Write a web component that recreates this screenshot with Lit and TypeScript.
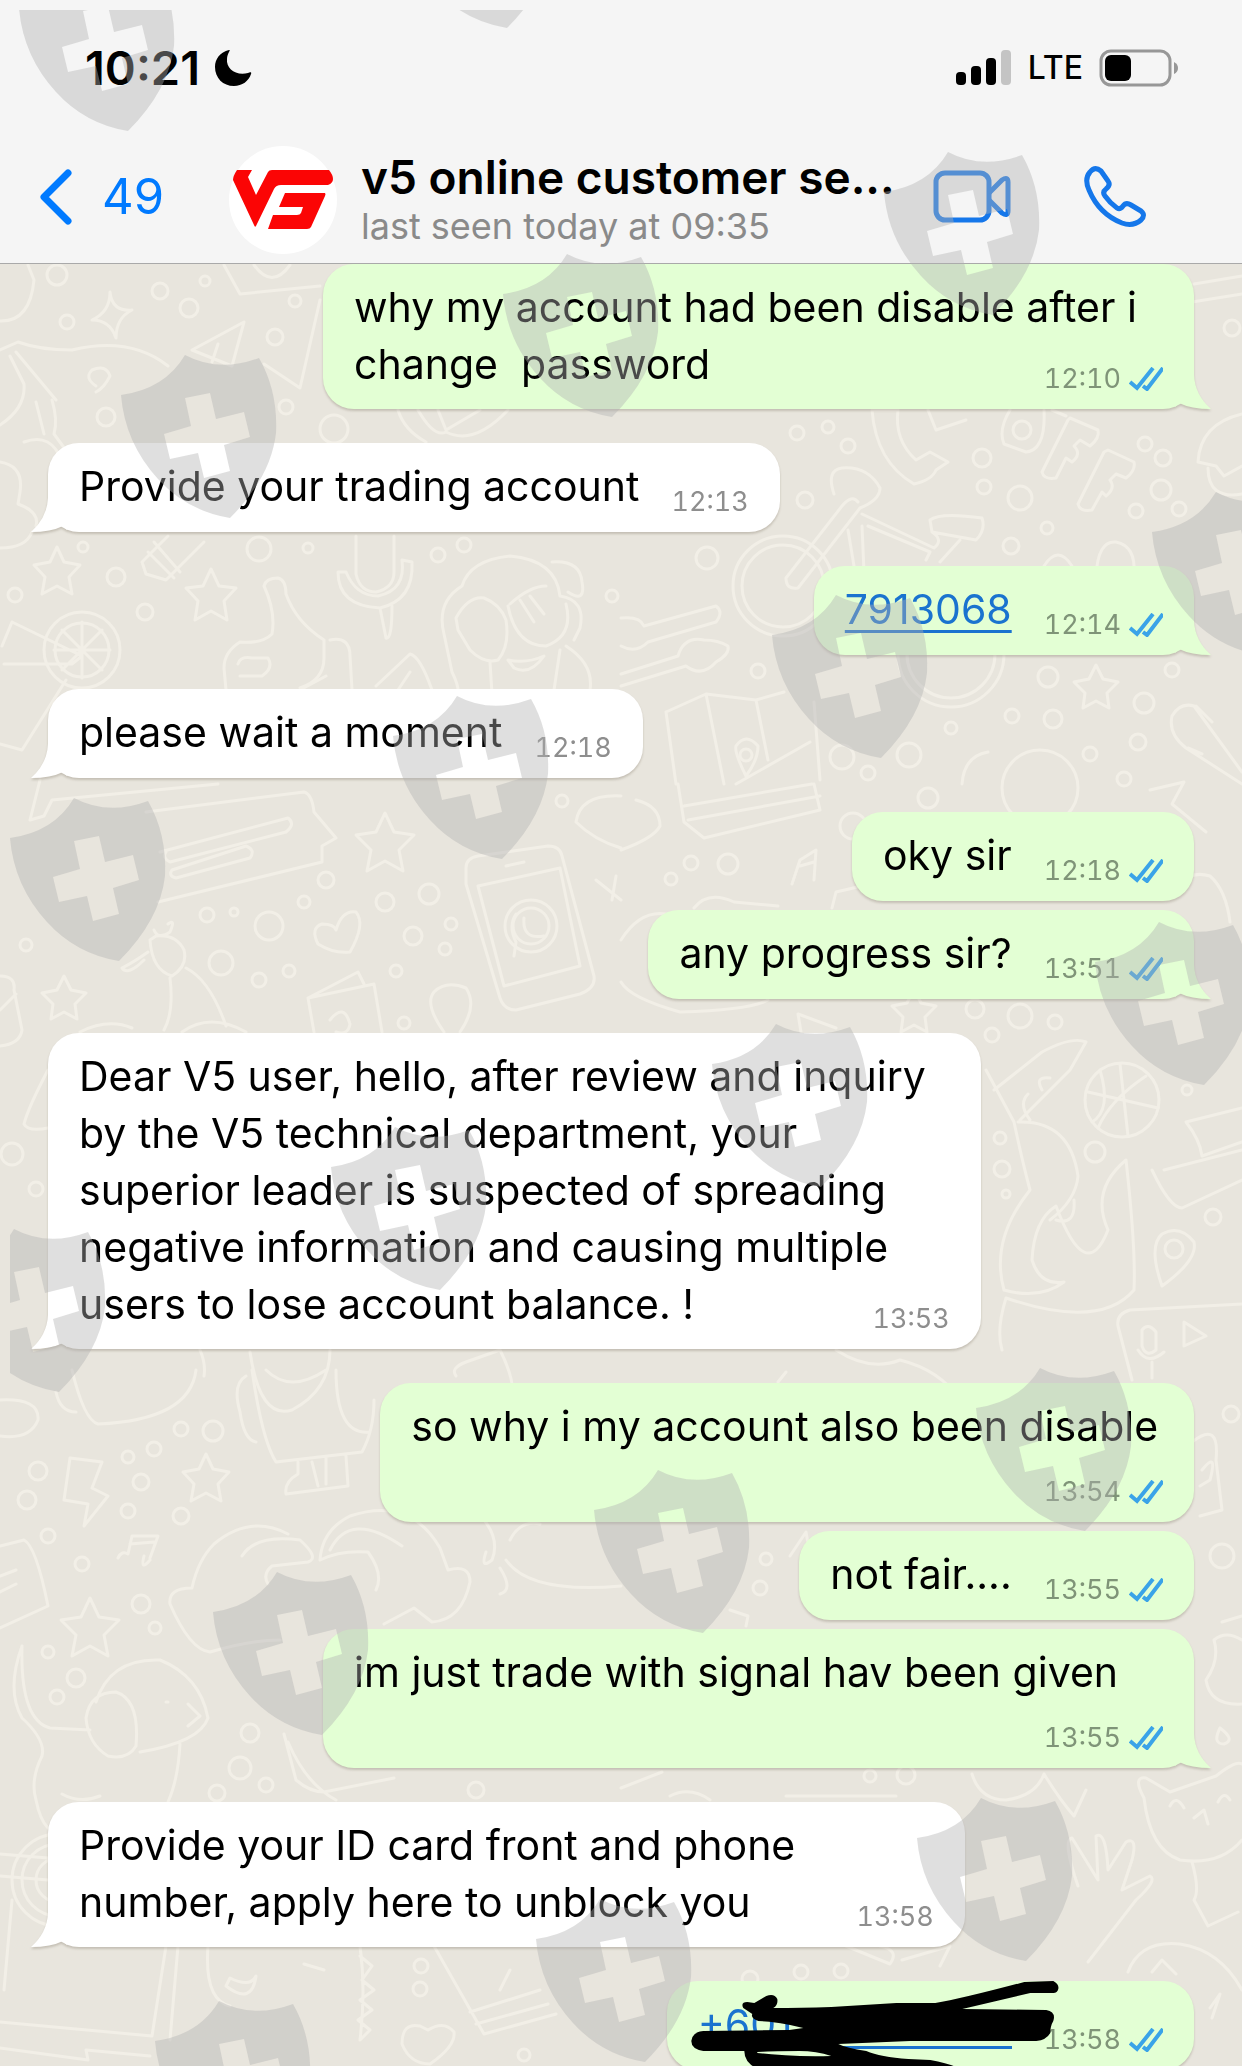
import { LitElement, html, svg, css, nothing } from "lit";
import { customElement, property } from "lit/decorators.js";
import { classMap } from "lit/directives/class-map.js";
import { styleMap } from "lit/directives/style-map.js";

interface Message {
  text: string;
  time: string;
  out?: boolean;
  link?: boolean;
  tail?: boolean;
  /** Share of the row, in percent, taken by a message that wraps. */
  share?: number;
  scribble?: boolean;
}

const MESSAGES: Message[] = [
  { text: "why my account had been disable after i\nchange  password", time: "12:10", out: true, tail: true, share: 76 },
  { text: "Provide your trading account", time: "12:13", tail: true },
  { text: "7913068", time: "12:14", out: true, tail: true, link: true },
  { text: "please wait a moment", time: "12:18", tail: true },
  { text: "oky sir", time: "12:18", out: true },
  { text: "any progress sir?", time: "13:51", out: true, tail: true },
  {
    text: "Dear V5 user, hello, after review and inquiry\nby the V5 technical department, your\nsuperior leader is suspected of spreading\nnegative information and causing multiple\nusers to lose account balance. !",
    time: "13:53", tail: true, share: 81.4,
  },
  { text: "so why i my account also been disable", time: "13:54", out: true, share: 71 },
  { text: "not fair....", time: "13:55", out: true },
  { text: "im just trade with signal hav been given", time: "13:55", out: true, tail: true, share: 76 },
  { text: "Provide your ID card front and phone\nnumber, apply here to unblock you", time: "13:58", tail: true, share: 80 },
  { text: "+601", time: "13:58", out: true, link: true, scribble: true },
];

/** Left edge and peak of every shield in the overlay. */
const SHIELDS: [number, number][] = [
  [19, -32], [398, -135], [884, 152], [503, 254], [121, 355], [1152, 492],
  [772, 595], [393, 696], [10, 798], [1095, 922], [712, 1024], [331, 1127],
  [-50, 1229], [976, 1368], [594, 1470], [213, 1572], [917, 1798],
  [536, 1899], [155, 2001],
];

const SHIELD_PATH =
  "M64 0Q98 18 138 3Q157 36 155 78Q150 122 109 163Q66 156 37 124Q4 88 0 40Q44 34 64 0Z" +
  "M64 43L70 71L43 79L49 104L77 98L83 123L109 116L103 90L129 82L123 57L95 64L89 38Z";

/** Outline of the pen strokes drawn over the phone number. */
const SCRIBBLE_PATH =
  "M743 2008Q740 2002 747 2002L754 2003L766 1996Q774 1993 777 1999Q778 2005 773 2008Q800 2008 831 2007L896 2003L935 2003" +
  "Q960 1999 1024 1982L1053 1981Q1059 1984 1058 1989Q1057 1993 1053 1993H1030L962 2009L1046 2010Q1056 2012 1053 2021" +
  "Q1050 2026 1050 2033Q1046 2040 1036 2041L910 2041L838 2044Q846 2048 866 2051Q880 2057 908 2059L930 2060Q946 2063 956 2067" +
  "L956 2072H766Q744 2066 744 2051H703Q691 2049 691 2041Q692 2032 703 2031L789 2030L803 2028Q780 2022 758 2021Q750 2018 752 2014Z" +
  "M757 2053Q790 2057 831 2056Q816 2051 799 2051Q776 2051 757 2052Z";

/** Small rings of the wallpaper: centre x, centre y, radius. */
const RINGS: [number, number, number][] = [
  [57, 275, 10], [205, 281, 5], [160, 291, 8], [189, 308, 9], [295, 301, 6], [67, 322, 7], [275, 337, 8],
  [106, 417, 9], [286, 407, 7], [334, 429, 14], [259, 549, 12], [308, 548, 5], [83, 547, 5], [116, 577, 9],
  [15, 595, 7], [438, 555, 7], [464, 545, 7], [145, 612, 8], [612, 596, 6], [797, 433, 7], [828, 427, 6],
  [848, 446, 7], [982, 458, 9], [984, 487, 7], [1020, 498, 12], [805, 500, 8], [1145, 444, 7], [1163, 458, 8],
  [1161, 490, 10], [1136, 511, 7], [1179, 509, 7], [1047, 528, 6], [1011, 546, 8], [707, 558, 11],
  [758, 671, 7], [1048, 677, 10], [1172, 670, 7], [1144, 703, 10], [1012, 716, 7], [1053, 719, 9],
  [951, 728, 6], [1138, 742, 8], [1090, 754, 7], [909, 755, 12], [842, 757, 12], [868, 773, 7], [1124, 779, 7],
  [1232, 328, 8], [326, 880, 8], [304, 902, 6], [385, 902, 9], [429, 894, 10], [207, 915, 7], [234, 912, 4],
  [269, 926, 14], [413, 936, 9], [451, 924, 6], [445, 949, 6], [26, 945, 6], [221, 963, 12], [259, 980, 7],
  [289, 971, 6], [396, 971, 6], [404, 1023, 6], [562, 801, 6], [12, 1154, 11], [36, 1189, 7], [928, 798, 10],
  [691, 863, 7], [728, 864, 10], [671, 879, 6], [853, 826, 13], [975, 1009, 9], [1020, 1016, 12],
  [1055, 1022, 7], [992, 1035, 7], [1187, 1090, 5], [1095, 1152, 10], [1000, 1138, 6], [1002, 1169, 8],
  [1213, 1217, 8], [1006, 1194, 4], [181, 1429, 7], [213, 1431, 10], [154, 1449, 7], [128, 1457, 6],
  [38, 1471, 9], [141, 1482, 8], [27, 1500, 9], [128, 1511, 7], [181, 1516, 8], [48, 1536, 7], [82, 1564, 7],
  [141, 1604, 9], [155, 1628, 6], [48, 1652, 6], [76, 1678, 9], [57, 1697, 7], [250, 1733, 9], [240, 1768, 11],
  [217, 1793, 8], [266, 1785, 7], [476, 1790, 8], [421, 1966, 7], [420, 1989, 7], [524, 2055, 6],
  [766, 1559, 6], [760, 1588, 7], [1231, 1414, 8], [1222, 1556, 12], [870, 1776, 6], [906, 1775, 9],
  [801, 1972, 7], [841, 1971, 7], [750, 1979, 8],
  // wheels, slices, balls and the badge on the tablet
  [783, 586, 50], [783, 586, 41], [951, 654, 53], [951, 654, 44], [82, 650, 38], [82, 650, 27],
  [1122, 1100, 37], [531, 926, 26], [531, 926, 18], [58, 1880, 46], [58, 1880, 36], [58, 1880, 22],
  [1174, 1249, 9], [746, 755, 6], [1022, 430, 9], [1040, 788, 38], [160, 724, 15],
];

/** Five-pointed stars: centre x, centre y, outer radius. */
const STARS: [number, number, number][] = [
  [57, 573, 26], [211, 597, 28], [1096, 689, 24], [385, 845, 32], [64, 1000, 24],
  [914, 1013, 24], [206, 1480, 26], [90, 1630, 32],
];

/** Open outlines of the wallpaper. */
const OUTLINES = [
  // four-point sparkle, sails, camera
  "M110 292Q112 312 132 310Q116 318 116 338Q110 320 92 320Q110 312 110 292Z",
  "M244 322L192 350L232 366ZM218 344L212 362M264 364L300 388L320 300",
  "M224 265L240 294L320 286M254 265Q272 290 290 265",
  "M0 321Q30 322 34 280L28 265M0 350L18 342Q40 350 72 350Q130 336 168 366M16 352L56 400M0 425Q26 408 24 384L10 356",
  "M96 386Q84 378 92 370Q106 364 110 376Q104 388 96 392M52 400Q58 420 54 434L76 464M36 402L44 434M24 442Q52 432 62 462",
  "M0 462Q24 466 20 492L18 504Q40 512 36 526M0 548Q26 548 32 532",
  // cup and bottle
  "M168 536L142 562L146 574L166 580L204 542M154 542L180 572M148 552L174 578",
  // thumb up
  "M264 586Q266 578 278 578Q286 580 286 594Q296 622 324 640V658Q324 680 300 688M264 586Q276 612 272 634Q262 644 240 642Q224 652 224 668L226 690M238 664Q240 656 252 658H268Q274 668 262 676H240M330 640Q350 636 350 656L352 690",
  // microphone
  "M356 536V574Q360 592 376 592Q394 588 394 572V536M338 572Q338 606 380 608Q414 600 412 562L402 560Q406 590 378 596Q356 596 346 572ZM380 608L386 638Q392 640 392 606",
  // covered face
  "M462 586Q470 560 510 556Q556 560 560 596Q586 600 580 628L574 640M462 586Q436 602 444 634L452 672Q462 692 456 700M456 618Q468 596 484 598Q500 604 506 620Q510 646 498 660Q484 664 470 650L458 630ZM510 604Q530 586 546 586M520 600L534 622M530 596L544 614M508 606Q516 646 546 646Q574 636 566 604M508 660Q526 664 544 656Q530 676 514 668ZM566 646Q594 664 590 690M490 662L492 694M560 650L554 690",
  "M552 562Q580 560 582 582Q586 604 568 592M376 686L410 654Q420 656 432 690M398 690L410 672M300 690L326 676",
  // cheese
  "M2 646L12 622L82 656L72 664L4 664M66 680L22 750L0 744M82 622V678M54 650H110M62 630L102 670M102 630L62 670",
  // drawings to the right of the first messages
  "M398 410Q404 430 426 442M418 410Q434 438 446 432Q474 446 508 410M438 410L446 430L480 410",
  "M872 410Q876 462 914 484Q932 480 936 470L948 462L930 452L916 460Q894 440 898 410ZM928 410L936 430L966 420",
  "M1010 410Q998 430 1004 444L1026 452Q1046 450 1044 410M1052 410L1066 416",
  "M1070 418L1098 430Q1100 438 1090 446L1080 440L1074 446Q1082 454 1072 462L1066 458L1056 478Q1044 480 1042 472L1068 420Z",
  "M1108 450L1134 462Q1136 470 1126 478L1116 474L1110 480Q1116 488 1106 496L1102 492L1092 510Q1080 512 1078 504L1104 452Z",
  "M1198 462Q1200 424 1242 414M1198 462L1216 466L1224 476L1242 466M1208 468Q1208 500 1242 494M1194 284L1242 276M1192 302L1242 294",
  // bicycle
  "M834 494Q826 470 842 468Q868 466 880 488Q880 500 860 508L798 588Q786 590 786 578L842 506Q852 494 858 502M862 514L934 548Q944 540 932 532L930 520Q940 512 982 518Q986 530 976 540L932 532M868 526L930 552M848 530L856 578M862 526L864 572M930 552L926 560M940 562L960 540",
  "M1044 566Q1058 544 1072 566M1096 576Q1098 540 1116 542Q1136 546 1134 574",
  // brush tools at the edge
  "M621 618Q640 616 644 626L716 606Q724 612 716 622L648 642Q636 654 621 646M621 674L678 656Q684 636 704 640Q718 640 728 646Q730 654 716 662Q702 678 686 666L621 686",
  // map
  "M666 712L706 694L756 700L784 692M666 712L676 784M706 694L724 784M756 700L768 760M814 702L820 780M736 784L810 742M746 776Q734 752 736 746Q746 732 758 746Q758 760 746 776Z",
  // dumbbell and gear
  "M1172 716Q1180 702 1194 706L1242 772M1172 716Q1168 734 1186 748L1242 784M1196 706L1212 722M1188 748L1202 754M962 784Q964 756 988 752",
  "M678 784L684 822L704 838L820 810L814 784M684 806L812 784M688 820L820 796",
  "M1150 790L1184 782L1172 804L1206 832",
  // speech bubble with lines
  "M40 780L30 820L44 816L52 800L218 784M146 812L304 792Q312 794 314 812L336 838L322 846L322 862L158 902M160 852L288 818Q296 824 286 832L170 862Q162 858 166 852M172 870L246 846Q256 850 250 858L176 878Q168 876 172 870",
  // tablet
  "M466 868Q466 858 478 856L548 846Q560 846 562 856L594 976Q596 988 580 994L516 1010Q504 1010 500 998L466 884ZM478 886L560 868L580 966L504 986ZM506 866L524 862M514 956L516 942Q508 926 516 914M524 918Q522 940 544 936",
  // heart, tag, balloons
  "M318 944Q310 928 322 924Q334 924 336 930Q342 910 356 912Q366 924 350 952Q334 954 318 944Z",
  "M308 998L358 972L364 984M308 998L314 1032M308 998L374 984L382 1032M330 1020Q344 1002 350 1024Q348 1036 336 1032",
  "M444 1032Q424 1004 434 992Q446 980 466 988Q478 1006 460 1032M621 848Q594 840 576 822Q580 794 621 796M636 800Q660 806 660 826Q654 838 621 850M596 880L621 900M616 876L612 900",
  "M168 924Q176 918 170 932Q158 940 154 930M150 940Q152 970 172 976Q188 966 184 950Q176 934 156 936ZM148 952Q134 962 122 968Q128 976 144 960M170 978Q174 1012 164 1030M186 968Q210 980 226 1026M80 1032Q108 1018 132 1028M182 1032Q210 1012 246 1032",
  "M0 976Q16 976 14 990L22 1030Q20 1044 0 1046M0 1010L16 994M48 1070Q28 1108 24 1124Q28 1132 48 1128",
  // note
  "M792 884L800 860L816 850L814 880M800 866L814 862",
  // plane and cat silhouettes behind the right column
  "M694 908Q708 890 734 902L778 906M832 908L836 892L862 886M621 940Q640 910 666 914M621 982Q630 998 680 1012Q750 1010 768 1000M801 1032L798 1014L836 1028",
  "M1178 886Q1190 870 1210 876Q1226 890 1230 922",
  // basketball seams
  "M1100 1070Q1112 1110 1092 1122M1088 1092L1158 1108M1120 1064L1128 1136M1146 1076Q1110 1100 1098 1128",
  // dinosaur and snake
  "M994 1090L1042 1052Q1072 1036 1086 1042L1070 1070Q1030 1110 1020 1120M1018 1122Q1070 1120 1078 1176Q1076 1200 1050 1220M986 1070L1014 1122Q1022 1160 1030 1190Q990 1240 1004 1290Q1040 1300 1064 1282Q1040 1286 1032 1260Q1034 1220 1056 1206Q1086 1286 1108 1230Q1090 1190 1126 1160Q1136 1250 1134 1290Q1100 1330 1006 1298Q996 1330 1002 1350M1042 1090Q1034 1076 1050 1078M1030 1120Q1018 1104 1028 1094M1056 1220Q1076 1226 1074 1200",
  "M1242 1108L1186 1122Q1200 1140 1202 1156L1242 1142M1152 1170Q1170 1208 1182 1208L1242 1180M1164 1170L1242 1150M1162 1286Q1148 1246 1162 1234Q1180 1224 1194 1242Q1198 1260 1162 1286Z",
  "M1242 1304L1130 1310Q1116 1314 1118 1326L1132 1380M1184 1322V1346L1206 1336ZM1142 1330Q1148 1322 1156 1332V1350Q1146 1358 1142 1346ZM1138 1350Q1148 1366 1164 1352M1152 1362V1378",
  "M200 1350Q206 1364 204 1376M250 1352Q260 1420 292 1410Q330 1390 330 1350M456 1376Q450 1368 466 1362L500 1350Q520 1390 508 1406M836 1350Q870 1372 900 1360Q940 1370 960 1400",
  // creature, mug and robot
  "M72 1370Q84 1420 98 1424Q190 1420 196 1370M0 1400Q40 1398 38 1420Q30 1440 0 1436M56 1392Q60 1412 76 1412M246 1376Q232 1384 240 1412Q244 1440 256 1442M252 1370Q262 1440 276 1462L362 1452Q374 1430 374 1400M336 1370Q336 1436 370 1432M266 1370Q290 1394 326 1370M298 1462V1474Q284 1482 286 1494L348 1486L346 1456M312 1462L318 1486M326 1458V1484",
  // lightning and note
  "M70 1458L102 1462L92 1488L108 1496L84 1526L88 1504L64 1500ZM118 1558Q122 1550 128 1554L132 1536H158L150 1558M130 1544L154 1542M150 1560Q140 1572 144 1556",
  // praying hands
  "M192 1588Q198 1560 214 1544Q250 1514 288 1534M242 1556Q256 1534 300 1540Q320 1558 308 1562L272 1566Q262 1574 268 1584M320 1560Q322 1530 350 1516Q410 1496 440 1548L448 1570Q470 1564 470 1582Q462 1620 432 1622L414 1608L384 1624M330 1550Q350 1510 402 1546M320 1560Q340 1550 368 1552Q384 1574 376 1590M192 1588Q168 1588 170 1604Q190 1650 210 1652Q250 1640 280 1640",
  "M0 1546L24 1540Q36 1546 48 1606L0 1628M0 1576L16 1570M0 1592L16 1584",
  // dog
  "M22 1646Q6 1690 22 1718Q46 1740 42 1756Q30 1780 36 1800Q40 1820 48 1828M22 1646Q20 1720 50 1728L90 1730M96 1702Q110 1658 160 1660Q200 1676 208 1718Q200 1742 140 1752M86 1718Q90 1692 116 1692Q140 1700 136 1746Q128 1760 108 1756Q88 1744 86 1718ZM180 1744Q178 1780 168 1802M62 1794Q80 1804 100 1796M188 1704L200 1716L188 1726M166 1702H168",
  "M284 1734L296 1780Q310 1792 324 1792L394 1778M288 1742Q306 1784 336 1800M484 1520Q500 1540 492 1560Q480 1570 486 1552M510 1540Q520 1520 540 1524M506 1560Q530 1594 621 1586M500 1568Q514 1590 500 1594",
  // frame, badge, ghost
  "M0 1854L48 1858M0 1876L48 1880M166 1946L152 2036L0 2022M178 1946L170 2040M0 2048L88 2060L86 2050L150 2056M52 1890Q46 1876 62 1876Q76 1886 58 1892M12 1900L4 1990",
  "M208 1946Q204 2000 230 2006M230 1978Q250 1988 256 1976Q252 2006 226 1986ZM304 1964L324 1970M360 1946Q366 1990 360 2040L370 2030L358 2020L372 2010L360 2000L374 1990L362 1980L372 1966L360 1956M434 1946L484 2034M470 2012L540 1990M476 2024L548 2004M484 2034L556 2014M500 1990L510 1970",
  "M402 2044Q402 2022 420 2026L428 2030Q444 2020 454 2032Q456 2046 430 2064Q410 2064 402 2044Z",
  // right column, lower half
  "M786 1372L778 1382M1192 1442Q1220 1420 1216 1460L1222 1510L1200 1516M1202 1470Q1218 1450 1210 1480L1200 1486M1222 1622L1242 1616M1242 1640Q1226 1630 1214 1640Q1220 1660 1206 1680Q1210 1706 1242 1704M1220 1728Q1236 1740 1224 1744Q1212 1744 1220 1728M621 1788L662 1772M790 1556L806 1532L812 1566M730 1610L748 1616L746 1626",
  // cat
  "M1144 1798Q1132 1776 1146 1778L1170 1792L1216 1776Q1236 1760 1242 1764M1144 1798Q1150 1850 1180 1860Q1220 1866 1242 1840M1170 1806Q1176 1794 1184 1808M1218 1802Q1224 1790 1230 1800M1194 1818L1204 1810L1208 1824M1192 1862Q1200 1890 1194 1900L1208 1926L1238 1912",
  // hand
  "M1078 1886Q1062 1840 1072 1838L1098 1880L1096 1836Q1106 1830 1108 1870L1126 1842Q1138 1836 1132 1860L1122 1890L1150 1876Q1158 1880 1136 1900L1088 1962",
  "M972 1774Q980 1800 1006 1800Q1036 1796 1044 1774M1044 1774Q1060 1800 1074 1816L1086 1790M786 1796L896 1796M670 1796Q690 1786 710 1800M1128 1972Q1140 1940 1180 1944Q1220 1950 1242 1990M1152 1972L1162 1960L1176 1974M1210 2008L1220 1994L1212 2018M846 1946L890 1964Q900 1950 880 1946M902 1960L950 1946L940 1966",
];

function starPath(cx: number, cy: number, r: number): string {
  const points: string[] = [];
  for (let i = 0; i < 10; i++) {
    const radius = i % 2 ? r * 0.5 : r;
    const angle = -Math.PI / 2 + (i * Math.PI) / 5;
    points.push(`${(cx + radius * Math.cos(angle) * 0.95).toFixed(0)} ${(cy + radius * Math.sin(angle)).toFixed(0)}`);
  }
  return `M${points.join("L")}Z`;
}

@customElement("chat-wallpaper")
export class ChatWallpaper extends LitElement {
  static styles = css`
    :host { position: absolute; inset: 0; overflow: hidden; background: #e8e5dd; }
    svg { display: block; width: 100%; height: 100%; }
    .lines { fill: none; stroke: #f2efe7; stroke-width: 3; stroke-linejoin: round; stroke-linecap: round; }
  `;

  render() {
    return html`
      <svg viewBox="0 264 1242 1802" preserveAspectRatio="xMidYMin slice" aria-hidden="true">
        <g class="lines">
          ${RINGS.map(([x, y, r]) => svg`<circle cx=${x} cy=${y} r=${r} />`)}
          ${STARS.map(([x, y, r]) => svg`<path d=${starPath(x, y, r)} />`)}
          ${OUTLINES.map((d) => svg`<path d=${d} />`)}
        </g>
      </svg>
    `;
  }
}

@customElement("chat-message")
export class ChatMessage extends LitElement {
  @property({ attribute: false }) message!: Message;

  static styles = css`
    :host { display: flex; }
    .bubble {
      position: relative;
      box-sizing: border-box;
      display: flex;
      gap: 32px;
      min-height: 89px;
      padding: 15px 31px 16px;
      border-radius: 31px;
      background: #ffffff;
      filter: drop-shadow(0 2px 1px rgba(90, 80, 60, 0.25));
      color: #000000;
      max-width: 100%;
    }
    .out { margin-left: auto; background: #e3ffd4; }
    .block { display: grid; min-height: 139px; }
    .block > .text, .block > .meta { grid-area: 1 / 1; }
    .text { margin: 0; font-size: 41px; line-height: 57px; white-space: pre-wrap; }
    .line { display: block; width: fit-content; }
    .meta {
      display: flex;
      align-items: center;
      gap: 8px;
      align-self: end;
      justify-self: end;
      margin-bottom: -1px;
      font-size: 27px;
      line-height: 30px;
      color: #8e8e8e;
      font-variant-numeric: tabular-nums;
    }
    .out .meta { color: #7f9478; }
    .ticks { display: block; width: 34px; height: 24px; }
    .tail { position: absolute; bottom: 0; width: 36px; height: 50px; fill: #ffffff; }
    .in .tail { left: -17px; }
    .out .tail { right: -17px; fill: #e3ffd4; transform: scaleX(-1); }
    a { color: #1a73cf; text-decoration: underline; text-decoration-thickness: 3px; text-underline-offset: 6px; }
    .covered a { display: block; min-width: 314px; height: 50px; border-bottom: 3px solid #1a73cf; text-decoration: none; }
    .scribble { position: absolute; inset: 0; width: 100%; height: 100%; overflow: visible; fill: #000000; fill-rule: evenodd; }
  `;

  private ticks() {
    return html`
      <svg class="ticks" viewBox="0 0 34 24" role="img" aria-label="Read" fill="none" stroke="#3aa3e8" stroke-width="4">
        <path d="M1 15L8 21L24 1" />
        <path d="M14 19L18 22L34 1" />
      </svg>
    `;
  }

  render() {
    const m = this.message;
    const classes = { bubble: true, out: !!m.out, in: !m.out, block: !!m.share, covered: !!m.scribble };
    const width = m.share ? { width: `${m.share}%` } : {};
    return html`
      <article class=${classMap(classes)} style=${styleMap(width)}>
        ${m.tail
          ? html`<svg class="tail" viewBox="0 0 36 50" aria-hidden="true"><path d="M17 0V16Q16 36 0 50Q20 50 32 44Q35 47 36 48V0Z" /></svg>`
          : nothing}
        <p class="text">${m.link
          ? html`<a href="tel:${m.text}">${m.text}</a>`
          : m.text.split("\n").map((line) => html`<span class="line">${line}</span>`)}</p>
        <div class="meta"><time>${m.time}</time>${m.out ? this.ticks() : nothing}</div>
        ${m.scribble
          ? html`<svg class="scribble" viewBox="668 1981 526 89" preserveAspectRatio="xMaxYMin meet" aria-hidden="true"><path d=${SCRIBBLE_PATH} /></svg>`
          : nothing}
      </article>
    `;
  }
}

@customElement("app-root")
export class AppRoot extends LitElement {
  static styles = css`
    :host {
      position: relative;
      display: flex;
      flex-direction: column;
      height: 100vh;
      overflow: hidden;
      font-family: Inter, "Liberation Sans", sans-serif;
      color: #000000;
    }
    header { position: relative; background: #f5f5f5; border-bottom: 1px solid #a9a9a9; }
    .status { display: flex; align-items: center; padding: 36px 64px 0 85px; height: 64px; }
    .clock { font-size: 47px; line-height: 64px; font-weight: 600; }
    .moon { width: 38px; height: 38px; margin-left: 14px; }
    .radio { display: flex; align-items: center; gap: 16px; margin-left: auto; }
    .radio svg { display: block; }
    .lte { font-size: 32px; line-height: 64px; font-weight: 500; }
    .signal { width: 56px; height: 36px; }
    .battery { width: 79px; height: 38px; }
    .bar { display: flex; align-items: center; padding: 36px 96px 0 36px; box-sizing: border-box; height: 163px; }
    button { padding: 0 0 6px; border: 0; background: none; font: inherit; color: #007aff; display: flex; align-items: center; }
    .back { gap: 30px; width: 193px; font-size: 49px; }
    .chevron { width: 36px; height: 60px; }
    .avatar { width: 108px; height: 108px; flex: none; }
    .who { flex: 1; min-width: 0; margin-left: 24px; }
    h1 { margin: 0; font-size: 46px; line-height: 52px; font-weight: 600; white-space: nowrap; }
    .seen { margin: 0; font-size: 36px; line-height: 46px; color: #8a8a8a; }
    .video { margin-right: 73px; }
    .call { width: 62px; }
    main { position: relative; flex: 1; min-height: 0; overflow: hidden; }
    .thread { position: relative; display: flex; flex-direction: column; gap: 34px; padding: 0 48px; }
    .group { display: flex; flex-direction: column; gap: 9px; }
    .shields { position: absolute; inset: 0; width: 100%; height: 100%; pointer-events: none; fill: rgba(178, 178, 178, 0.41); fill-rule: evenodd; }
  `;

  private groups(): Message[][] {
    const groups: Message[][] = [];
    for (const m of MESSAGES) {
      const last = groups[groups.length - 1];
      if (last && !!last[0].out === !!m.out) last.push(m);
      else groups.push([m]);
    }
    return groups;
  }

  render() {
    return html`
      <header>
        <div class="status">
          <time class="clock">10:21</time>
          <svg class="moon" viewBox="0 0 38 38" role="img" aria-label="Do not disturb">
            <path d="M15 1C6 3 1 10 1 18C1 29 9 37 20 37C28 37 35 32 37 25C38 23 36 23 34 24C22 27 12 20 13 10C13 7 14 5 15 3C16 1 16 1 15 1Z" />
          </svg>
          <div class="radio">
            <svg class="signal" viewBox="0 0 56 36" role="img" aria-label="Signal 3 of 4">
              <rect x="0" y="22" width="10" height="13" rx="4" />
              <rect x="15" y="16" width="10" height="19" rx="4" />
              <rect x="30" y="8" width="10" height="27" rx="4" />
              <rect x="45" y="0" width="10" height="35" rx="4" fill="#c4c4c4" />
            </svg>
            <span class="lte">LTE</span>
            <svg class="battery" viewBox="0 0 79 38" role="img" aria-label="Battery 38%">
              <rect x="2" y="2" width="69" height="34" rx="10" fill="none" stroke="#979797" stroke-width="3" />
              <rect x="6" y="6" width="26" height="26" rx="6" />
              <path d="M75 13Q79 15 79 19Q79 23 75 25Z" fill="#979797" />
            </svg>
          </div>
        </div>
        <div class="bar">
          <button class="back" aria-label="Back, 49 unread chats">
            <svg class="chevron" viewBox="0 0 36 60" fill="none" stroke="#007aff" stroke-width="7" stroke-linecap="round" stroke-linejoin="round">
              <path d="M32 6L8 30L32 54" />
            </svg>
            <span>49</span>
          </button>
          <svg class="avatar" viewBox="229 144 108 108" role="img" aria-label="V5 logo">
            <circle cx="283" cy="198" r="54" fill="#ffffff" />
            <path fill="#fb0505" d="M237 168H252L248 175L256 193L268 170Q269 168 272 168H329Q333 173 333 177Q333 181 328 183H281Q276 183 274 187L256 224Q255 226 254 223L233 178Q233 174 237 168Z" />
            <path fill="#fb0505" d="M285 191H325Q326 192 325 194L311 225Q310 227 307 227H268L273 213H297Q300 213 301 211L303 205H279Z" />
          </svg>
          <div class="who">
            <h1>v5 online customer se...</h1>
            <p class="seen">last seen today at 09:35</p>
          </div>
          <button class="video" aria-label="Video call">
            <svg width="78" height="54" viewBox="0 0 78 54" fill="none" stroke="#1577ea" stroke-width="5" stroke-linejoin="round">
              <rect x="3" y="3" width="53" height="47" rx="9" />
              <path d="M56 23L69 10Q75 6 75 12V41Q75 47 69 43L56 30" />
            </svg>
          </button>
          <button class="call" aria-label="Voice call">
            <svg width="62" height="62" viewBox="0 0 62 62" fill="none" stroke="#1577ea" stroke-width="5" stroke-linejoin="round">
              <path d="M6 6Q11 0 17 5L24 15Q27 19 22 23Q18 26 21 30Q26 37 33 42Q36 44 39 40Q42 36 47 39L57 45Q62 49 57 54Q49 61 38 57Q15 48 5 24Q0 13 6 6Z" />
            </svg>
          </button>
        </div>
      </header>
      <main>
        <chat-wallpaper></chat-wallpaper>
        <div class="thread">
          ${this.groups().map(
            (group) => html`<section class="group">
              ${group.map((m) => html`<chat-message .message=${m}></chat-message>`)}
            </section>`,
          )}
        </div>
      </main>
      <svg class="shields" viewBox="0 0 1242 2066" preserveAspectRatio="xMidYMin slice" aria-hidden="true">
        <defs><clipPath id="edge"><rect x="10" y="10" width="1232" height="2056" /></clipPath></defs>
        <g clip-path="url(#edge)">
          ${SHIELDS.map(([x, y]) => svg`<path transform="translate(${x} ${y})" d=${SHIELD_PATH} />`)}
        </g>
      </svg>
    `;
  }
}
